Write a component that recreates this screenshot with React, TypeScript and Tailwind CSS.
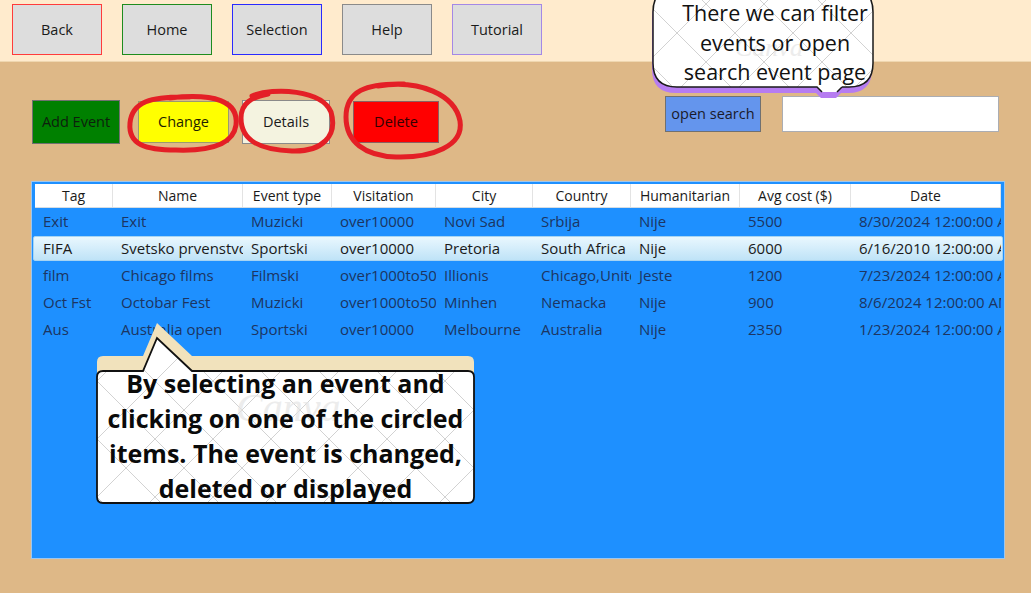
import React from "react";

type EventRow = {
  tag: string;
  name: string;
  type: string;
  visitation: string;
  city: string;
  country: string;
  humanitarian: string;
  cost: string;
  date: string;
};

const columns = [
  { label: "Tag", w: "w-[78px]" },
  { label: "Name", w: "w-[130px]" },
  { label: "Event type", w: "w-[89px]" },
  { label: "Visitation", w: "w-[104px]" },
  { label: "City", w: "w-[97px]" },
  { label: "Country", w: "w-[98px]" },
  { label: "Humanitarian", w: "w-[109px]" },
  { label: "Avg cost ($)", w: "w-[111px]" },
  { label: "Date", w: "w-[150px]" },
];

const rows: EventRow[] = [
  { tag: "Exit", name: "Exit", type: "Muzicki", visitation: "over10000", city: "Novi Sad", country: "Srbija", humanitarian: "Nije", cost: "5500", date: "8/30/2024 12:00:00 AM" },
  { tag: "FIFA", name: "Svetsko prvenstvo", type: "Sportski", visitation: "over10000", city: "Pretoria", country: "South Africa", humanitarian: "Nije", cost: "6000", date: "6/16/2010 12:00:00 AM" },
  { tag: "film", name: "Chicago films", type: "Filmski", visitation: "over1000to5000", city: "Illionis", country: "Chicago,United States", humanitarian: "Jeste", cost: "1200", date: "7/23/2024 12:00:00 AM" },
  { tag: "Oct Fst", name: "Octobar Fest", type: "Muzicki", visitation: "over1000to5000", city: "Minhen", country: "Nemacka", humanitarian: "Nije", cost: "900", date: "8/6/2024 12:00:00 AM" },
  { tag: "Aus", name: "Australia open", type: "Sportski", visitation: "over10000", city: "Melbourne", country: "Australia", humanitarian: "Nije", cost: "2350", date: "1/23/2024 12:00:00 AM" },
];

const navButtons = [
  { label: "Back", border: "border-[#ff3b3b]" },
  { label: "Home", border: "border-[#1e8c1e]" },
  { label: "Selection", border: "border-[#2a2aff]" },
  { label: "Help", border: "border-[#8a8a8a]" },
  { label: "Tutorial", border: "border-[#a488e6]" },
];

function rowCells(r: EventRow) {
  return [r.tag, r.name, r.type, r.visitation, r.city, r.country, r.humanitarian, r.cost, r.date];
}

const bubbleBody =
  "M103 371 L143 371 L157 338 L192 371 L468 371 Q474 371 474 377 L474 497 Q474 503 468 503 L103 503 Q97 503 97 497 L97 377 Q97 371 103 371 Z";
const topBubble =
  "M653 12 Q653 -12 677 -12 L849 -12 Q873 -12 873 12 L873 63 Q873 87 849 87 L842 87 L837 92 L822 92 L817 87 L677 87 Q653 87 653 63 Z";

export default function App() {
  return (
    <div
      className="relative h-[593px] w-[1031px] overflow-hidden bg-[#DEB887]"
      style={{ fontFamily: '"Open Sans", "Noto Sans", sans-serif' }}
    >
      {/* top nav */}
      <div className="flex h-[62px] items-start gap-[20px] border-b border-[#efd7b0] bg-[#FFEBCD] pl-[12px] pt-[4px]">
        {navButtons.map((b) => (
          <button
            key={b.label}
            className={`flex h-[51px] w-[90px] items-center justify-center border bg-[#DDDDDD] text-[14.5px] text-[#1a1a1a] ${b.border}`}
          >
            {b.label}
          </button>
        ))}
      </div>

      {/* actions */}
      <div className="flex h-[119px] items-start pl-[32px] pt-[38px]">
        <button className="h-[44px] w-[88px] border border-[#707070] bg-[#008000] text-[14.5px] text-[#0d1f0d]">
          Add Event
        </button>
        <button className="ml-[18px] mt-[1px] h-[42px] w-[91px] border border-[#9a9a70] bg-[#FFFF00] text-[14.5px] text-[#1f1f00]">
          Change
        </button>
        <button className="ml-[13px] h-[44px] w-[88px] border border-[#8a8a8a] bg-[#F4F3E0] text-[14.5px] text-[#1a1a1a]">
          Details
        </button>
        <button className="ml-[23px] mt-[1px] h-[42px] w-[86px] border border-[#8a6060] bg-[#FF0000] text-[14.5px] text-[#330000]">
          Delete
        </button>
        <button className="ml-[226px] mt-[-4px] h-[36px] w-[96px] border border-[#707070] bg-[#6495ED] text-[14.5px] text-[#1a1a2a]">
          open search
        </button>
        <input
          className="ml-[21px] mt-[-4px] h-[36px] w-[217px] border border-[#abadb3] bg-white outline-none"
          readOnly
        />
      </div>

      {/* grid */}
      <div className="ml-[31px] h-[378px] w-[974px] border border-[#9cc6ef] bg-[#1E90FF] px-[3px] pt-[2px]">
        <div className="flex h-[24px] border-b border-[#d5dde4] bg-white">
          {columns.map((c) => (
            <div
              key={c.label}
              className={`flex shrink-0 items-center justify-center border-r border-[#e3e3e3] text-[14px] text-[#1a1a1a] ${c.w}`}
            >
              {c.label}
            </div>
          ))}
        </div>
        {rows.map((r, i) => {
          const selected = i === 1;
          return (
            <div key={r.tag} className={`h-[27px] ${selected ? "py-px" : ""}`}>
              <div
                className={
                  selected
                    ? "-mx-[2px] flex h-full rounded-[2px] border border-[#a6d4f3] bg-gradient-to-b from-[#e9f7fe] to-[#bfe3f7] pl-px text-[#1a1a1a]"
                    : "flex h-full text-[#1c3562]"
                }
              >
                {rowCells(r).map((v, j) => (
                  <div
                    key={j}
                    className={`flex shrink-0 items-center overflow-hidden whitespace-nowrap pl-[8px] text-[15px] ${columns[j].w}`}
                  >
                    {v}
                  </div>
                ))}
              </div>
            </div>
          );
        })}
      </div>

      {/* overlays: hand drawn circles and callouts */}
      <svg className="pointer-events-none absolute inset-0" width="1031" height="593" viewBox="0 0 1031 593">
        <defs>
          <pattern id="xgrid" width="58" height="58" patternUnits="userSpaceOnUse" x="10" y="4">
            <path d="M0 0 L58 58 M58 0 L0 58" stroke="#cdcdcd" strokeWidth="0.9" fill="none" />
          </pattern>
        </defs>

        <g fill="none" stroke="#e41f26" strokeWidth="5" strokeLinecap="round" strokeLinejoin="round">
          <path d="M170 98 C 214 93, 239 101, 236 125 C 233 147, 205 151, 176 150 C 146 150, 128 145, 130 123 C 132 102, 150 96, 190 97" />
          <path d="M252 96 C 274 87, 322 90, 331 112 C 338 136, 322 152, 292 151 C 262 150, 241 142, 241 118 C 241 103, 252 97, 268 94" />
          <path d="M378 86 C 420 79, 455 95, 460 121 C 464 146, 432 158, 396 157 C 365 156, 346 142, 346 117 C 346 91, 366 83, 404 84" />
        </g>

        {/* top right callout */}
        <path transform="translate(-1 6)" d={topBubble} fill="#b67cf1" />
        <path d={topBubble} fill="#ffffff" />
        <path d={topBubble} fill="url(#xgrid)" />
        <path
          d="M842 87 L849 87 Q873 87 873 63 L873 12 Q873 -12 849 -12 M677 -12 Q653 -12 653 12 L653 63 Q653 87 677 87 L817 87 L822 92 M837 92 L842 87"
          fill="none"
          stroke="#1a1a1a"
          strokeWidth="1.5"
        />

        {/* bottom left callout */}
        <path transform="translate(0 -15)" d={bubbleBody} fill="#f1e2bc" />
        <path d={bubbleBody} fill="#ffffff" />
        <path d={bubbleBody} fill="url(#xgrid)" stroke="#111111" strokeWidth="1.8" />
      </svg>

      <div
        className="pointer-events-none absolute left-[236px] top-[378px] text-[40px] italic text-[#e4e4e4] opacity-70"
        style={{ fontFamily: '"Liberation Serif", serif' }}
      >
        Canva
      </div>
      <div
        className="pointer-events-none absolute left-[735px] top-[28px] text-[26px] italic text-[#e4e4e4] opacity-70"
        style={{ fontFamily: '"Liberation Serif", serif' }}
      >
        Canva
      </div>

      <div className="pointer-events-none absolute left-[660px] top-[-2px] w-[230px] text-center text-[21.5px] leading-[29.5px] text-[#111]">
        There we can filter
        <br />
        events or open
        <br />
        search event page
      </div>

      <div className="pointer-events-none absolute left-[97px] top-[366px] w-[377px] text-center text-[25px] font-bold leading-[35px] text-[#0a0a0a]">
        By selecting an event and clicking on one of the circled items. The event is changed, deleted or displayed
      </div>
    </div>
  );
}
